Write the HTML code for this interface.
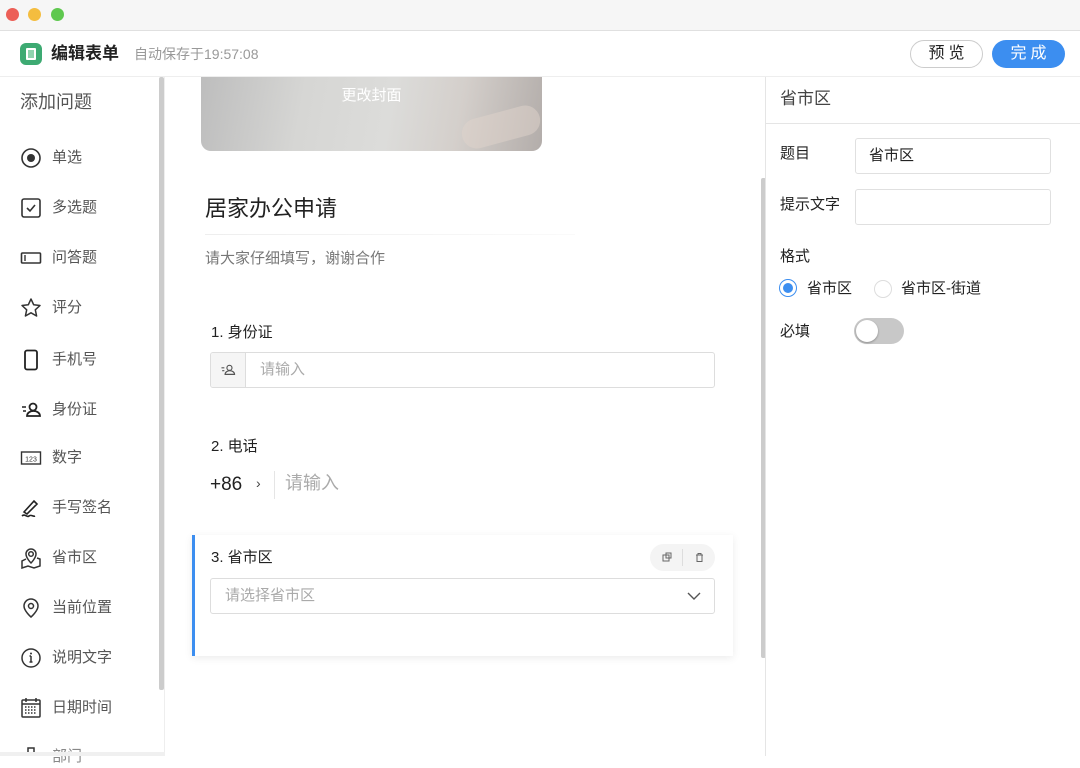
<!DOCTYPE html>
<html><head><meta charset="utf-8"><style>
*{margin:0;padding:0;box-sizing:border-box}
body{width:1080px;height:756px;overflow:hidden;background:#fff;font-family:"Liberation Sans","Noto Sans CJK SC",sans-serif;color:#222;position:relative;line-height:1.32}
.abs{position:absolute}
.dot{position:absolute;top:8px;width:13px;height:13px;border-radius:50%}
.side .it{position:absolute;left:20px;display:flex;align-items:center;font-size:15px;color:#555}
.side .it svg{width:22px;height:22px;margin-right:10px}
.lbl{font-size:15px;color:#222}
</style></head><body>
<div class="abs" style="left:0;top:0;width:1080px;height:31px;background:#f6f6f6;border-bottom:1px solid #e0e0e0"></div>
<div class="dot" style="left:6px;background:#ec5f57"></div>
<div class="dot" style="left:28px;background:#f4bd3f"></div>
<div class="dot" style="left:51px;background:#5fc84f"></div>
<div class="abs" style="left:0;top:31px;width:1080px;height:46px;background:#fff;border-bottom:1px solid #eee"></div>
<div class="abs" style="left:20px;top:43px;width:22px;height:22px;border-radius:6px;background:#3daa72"><div style="position:absolute;left:6px;top:5px;width:10px;height:12px;border:2px solid #fff;border-radius:1px;background:#8fd3ae"></div></div>
<div class="abs" style="left:51px;top:43px;font-size:17px;font-weight:bold;color:#222">编辑表单</div>
<div class="abs" style="left:134px;top:45px;font-size:14px;color:#999">自动保存于19:57:08</div>
<div class="abs" style="left:910px;top:40px;width:73px;height:28px;border:1px solid #ccc;border-radius:14px;text-align:center;font-size:16px;line-height:26px;letter-spacing:4px;padding-left:4px">预览</div>
<div class="abs" style="left:992px;top:40px;width:73px;height:28px;background:#3c8ef0;border-radius:14px;text-align:center;font-size:16px;line-height:28px;color:#fff;letter-spacing:4px;padding-left:4px">完成</div>
<div class="side">
<div class="abs" style="left:159px;top:77px;width:5px;height:613px;background:#ccc;border-radius:2px"></div>
<div class="abs" style="left:164px;top:77px;width:1px;height:679px;background:#eee"></div>
<div class="abs" style="left:20px;top:91px;font-size:18px;color:#555">添加问题</div>
<div class="it" style="top:147px"><svg viewBox="0 0 22 22"><circle cx="11" cy="11" r="9" fill="none" stroke="#333" stroke-width="1.6"/><circle cx="11" cy="11" r="4" fill="#333"/></svg>单选</div>
<div class="it" style="top:197px"><svg viewBox="0 0 22 22"><rect x="2" y="2" width="18" height="18" rx="2" fill="none" stroke="#333" stroke-width="1.6"/><path d="M7 11l3 3 5-6" fill="none" stroke="#333" stroke-width="1.6"/></svg>多选题</div>
<div class="it" style="top:247px"><svg viewBox="0 0 22 22"><rect x="1.5" y="6" width="19" height="10" rx="1" fill="none" stroke="#333" stroke-width="1.6"/><path d="M5 8v6" stroke="#333" stroke-width="1.4"/></svg>问答题</div>
<div class="it" style="top:297px"><svg viewBox="0 0 22 22"><path d="M11 2l2.7 5.8 6.3.7-4.7 4.3 1.3 6.2L11 15.8 5.4 19l1.3-6.2L2 8.5l6.3-.7z" fill="none" stroke="#333" stroke-width="1.5" stroke-linejoin="round"/></svg>评分</div>
<div class="it" style="top:349px"><svg viewBox="0 0 22 22"><rect x="5" y="1.5" width="12" height="19" rx="2" fill="none" stroke="#222" stroke-width="1.8"/></svg>手机号</div>
<div class="it" style="top:399px"><svg viewBox="0 0 22 22"><path d="M2 8h4M3 12h3" stroke="#222" stroke-width="1.6"/><circle cx="13" cy="8" r="3.5" fill="none" stroke="#222" stroke-width="1.8"/><path d="M7 17h13c0-3-3-5-6.5-5S7 14 7 17z" fill="none" stroke="#222" stroke-width="1.8"/></svg>身份证</div>
<div class="it" style="top:447px"><svg viewBox="0 0 22 22"><rect x="1.5" y="5" width="19" height="12" fill="none" stroke="#333" stroke-width="1.4"/><text x="11" y="14.5" font-size="7" text-anchor="middle" fill="#333" font-family="Liberation Sans">123</text></svg>数字</div>
<div class="it" style="top:497px"><svg viewBox="0 0 22 22"><path d="M4 15L14 4l3 3L7 17zM2 19c3-3 5 2 7 0s4 1 6 0" fill="none" stroke="#222" stroke-width="1.6"/></svg>手写签名</div>
<div class="it" style="top:547px"><svg viewBox="0 0 22 22"><circle cx="11" cy="7" r="2.3" fill="none" stroke="#333" stroke-width="1.5"/><path d="M11 16s-5-5-5-9a5 5 0 0110 0c0 4-5 9-5 9zM6 12l-4 2v7l6-2 6 2 6-2v-7l-3-1" fill="none" stroke="#333" stroke-width="1.5"/></svg>省市区</div>
<div class="it" style="top:597px"><svg viewBox="0 0 22 22"><circle cx="11" cy="9" r="2.5" fill="none" stroke="#333" stroke-width="1.5"/><path d="M11 20s-7-6-7-11a7 7 0 0114 0c0 5-7 11-7 11z" fill="none" stroke="#333" stroke-width="1.5"/></svg>当前位置</div>
<div class="it" style="top:647px"><svg viewBox="0 0 22 22"><circle cx="11" cy="11" r="9" fill="none" stroke="#333" stroke-width="1.5"/><path d="M11 9v6M9.5 15h3M9.5 9H11" stroke="#333" stroke-width="1.5"/><circle cx="11" cy="6.5" r="1" fill="#333"/></svg>说明文字</div>
<div class="it" style="top:697px"><svg viewBox="0 0 22 22"><rect x="2" y="3" width="18" height="17" rx="1" fill="none" stroke="#333" stroke-width="1.5"/><path d="M2 7h18M6 1v4M16 1v4" stroke="#333" stroke-width="1.5"/><path d="M5 10h12M5 13h12M5 16h12" stroke="#333" stroke-width="1.5" stroke-dasharray="1.5 1.5"/></svg>日期时间</div>
<div class="it" style="top:746px;color:#888"><svg viewBox="0 0 22 22"><rect x="8" y="2" width="6" height="6" fill="none" stroke="#333" stroke-width="1.5"/></svg>部门</div>
<div class="abs" style="left:0;top:752px;width:165px;height:4px;background:#f0f0f0"></div>
</div>
<div class="abs" style="left:201px;top:77px;width:341px;height:74px;border-radius:0 0 10px 10px;background:linear-gradient(100deg,#bdbdbd 0%,#d6d6d4 30%,#dcdcda 55%,#d4cfcb 75%,#b3adaa 100%);overflow:hidden">
<div style="position:absolute;left:260px;top:35px;width:80px;height:30px;background:#e0d4cc;border-radius:15px;opacity:.5;transform:rotate(-15deg)"></div>
<div style="position:absolute;width:100%;top:9px;text-align:center;color:#fff;font-size:15px">更改封面</div>
</div>
<div class="abs" style="left:205px;top:194px;font-size:22px;color:#222">居家办公申请</div>
<div class="abs" style="left:205px;top:234px;width:370px;height:1px;background:linear-gradient(90deg,#eee,#fafafa)"></div>
<div class="abs" style="left:205px;top:249px;font-size:15px;color:#777">请大家仔细填写，谢谢合作</div>
<div class="abs lbl" style="left:211px;top:323px">1. 身份证</div>
<div class="abs" style="left:210px;top:352px;width:505px;height:36px;border:1px solid #ddd;border-radius:3px;overflow:hidden">
<div style="position:absolute;left:0;top:0;width:35px;height:34px;background:#f5f5f5;border-right:1px solid #ddd"><svg style="position:absolute;left:9px;top:9px" width="16" height="16" viewBox="0 0 22 22"><path d="M2 8h4M3 12h3" stroke="#555" stroke-width="1.6"/><circle cx="13" cy="8" r="3.5" fill="none" stroke="#555" stroke-width="1.6"/><path d="M7 17h13c0-3-3-5-6.5-5S7 14 7 17z" fill="none" stroke="#555" stroke-width="1.6"/></svg></div>
<div style="position:absolute;left:49px;top:7px;font-size:15px;color:#aaa">请输入</div></div>
<div class="abs lbl" style="left:211px;top:437px">2. 电话</div>
<div class="abs" style="left:210px;top:472px;font-size:19px;color:#222">+86</div>
<div class="abs" style="left:256px;top:474px;font-size:14px;color:#444">›</div>
<div class="abs" style="left:274px;top:471px;width:1px;height:28px;background:#e5e5e5"></div>
<div class="abs" style="left:285px;top:472px;font-size:18px;color:#aaa">请输入</div>
<div class="abs" style="left:192px;top:535px;width:541px;height:121px;background:#fff;border-left:3px solid #3c8ef0;box-shadow:0 2px 8px rgba(0,0,0,.08)"></div>
<div class="abs lbl" style="left:211px;top:548px">3. 省市区</div>
<div class="abs" style="left:650px;top:544px;width:65px;height:27px;border-radius:14px;background:#f4f4f4"><div style="position:absolute;left:32px;top:5px;width:1px;height:17px;background:#ddd"></div>
<svg style="position:absolute;left:12px;top:8px" width="11" height="11" viewBox="0 0 11 11"><rect x="1" y="3" width="6" height="6" fill="none" stroke="#666"/><rect x="4" y="1" width="5" height="5" fill="none" stroke="#666"/></svg>
<svg style="position:absolute;left:44px;top:8px" width="11" height="11" viewBox="0 0 11 11"><path d="M2 3h7M4 3V1.5h3V3M3 3v6.5h5V3" fill="none" stroke="#666"/></svg></div>
<div class="abs" style="left:210px;top:578px;width:505px;height:36px;border:1px solid #ddd;border-radius:3px"><div style="position:absolute;left:14px;top:7px;font-size:15px;color:#aaa">请选择省市区</div>
<svg style="position:absolute;right:13px;top:11px" width="14" height="12" viewBox="0 0 14 12"><path d="M1 3l6 6 6-6" fill="none" stroke="#555" stroke-width="1.4"/></svg></div>
<div class="abs" style="left:761px;top:178px;width:5px;height:480px;background:#ccc;border-radius:2px"></div>
<div class="abs" style="left:765px;top:77px;width:1px;height:679px;background:#e5e5e5"></div>
<div class="abs" style="left:780px;top:88px;font-size:17px;color:#444">省市区</div>
<div class="abs" style="left:766px;top:123px;width:314px;height:1px;background:#e5e5e5"></div>
<div class="abs lbl" style="left:780px;top:144px">题目</div>
<div class="abs" style="left:855px;top:138px;width:196px;height:36px;border:1px solid #e0e0e0;border-radius:3px;font-size:15px;padding:7px 13px">省市区</div>
<div class="abs lbl" style="left:780px;top:195px">提示文字</div>
<div class="abs" style="left:855px;top:189px;width:196px;height:36px;border:1px solid #e0e0e0;border-radius:3px"></div>
<div class="abs lbl" style="left:780px;top:247px">格式</div>
<div class="abs" style="left:779px;top:279px;width:18px;height:18px;border-radius:50%;border:1px solid #3c8ef0"><div style="position:absolute;left:3px;top:3px;width:10px;height:10px;border-radius:50%;background:#3c8ef0"></div></div>
<div class="abs lbl" style="left:807px;top:279px">省市区</div>
<div class="abs" style="left:874px;top:280px;width:18px;height:18px;border-radius:50%;border:1px solid #ddd"></div>
<div class="abs lbl" style="left:901px;top:279px">省市区-街道</div>
<div class="abs lbl" style="left:780px;top:322px">必填</div>
<div class="abs" style="left:854px;top:318px;width:50px;height:26px;border-radius:13px;background:#c8c8c8"><div style="position:absolute;left:2px;top:2px;width:22px;height:22px;border-radius:50%;background:#fff;box-shadow:0 1px 2px rgba(0,0,0,.3)"></div></div>
</body></html>
